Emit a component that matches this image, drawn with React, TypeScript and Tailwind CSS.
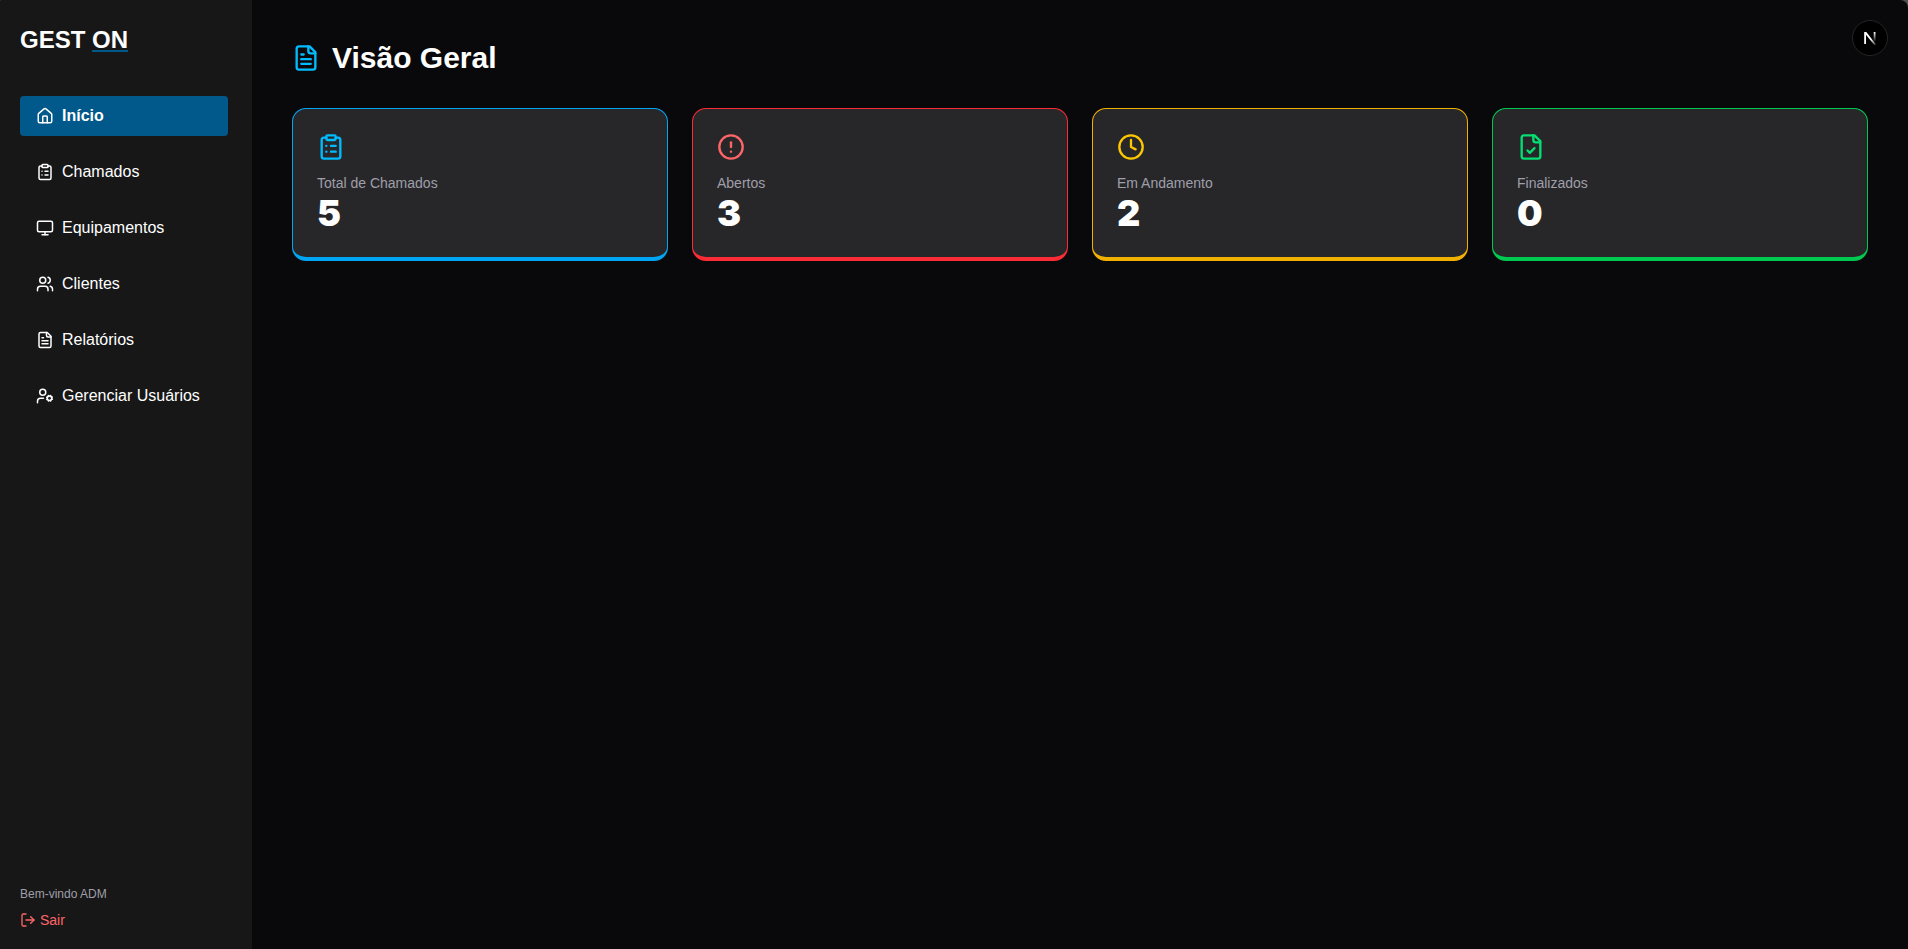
import {
  LuCircleAlert,
  LuClipboardList,
  LuClock,
  LuFileCheck,
  LuFileText,
  LuHouse,
  LuLogOut,
  LuMonitor,
  LuUserCog,
  LuUsers,
} from "react-icons/lu";

const navItems = [
  { label: "Início", icon: LuHouse, active: true },
  { label: "Chamados", icon: LuClipboardList, active: false },
  { label: "Equipamentos", icon: LuMonitor, active: false },
  { label: "Clientes", icon: LuUsers, active: false },
  { label: "Relatórios", icon: LuFileText, active: false },
  { label: "Gerenciar Usuários", icon: LuUserCog, active: false },
];

const stats = [
  { label: "Total de Chamados", value: 5, icon: LuClipboardList, border: "border-sky-500", color: "text-sky-400" },
  { label: "Abertos", value: 3, icon: LuCircleAlert, border: "border-red-500", color: "text-red-400" },
  { label: "Em Andamento", value: 2, icon: LuClock, border: "border-yellow-500", color: "text-yellow-400" },
  { label: "Finalizados", value: 0, icon: LuFileCheck, border: "border-green-500", color: "text-green-400" },
];

function Sidebar() {
  return (
    <aside className="flex w-63 shrink-0 flex-col justify-between bg-neutral-900 pt-5 pr-6 pb-[19px] pl-5">
      <div>
        <div className="mb-10 pt-1 text-2xl font-bold">
          GEST <span className="underline decoration-sky-800 decoration-2 underline-offset-2">ON</span>
        </div>
        <nav className="flex flex-col gap-4">
          {navItems.map(({ label, icon: Icon, active }) => (
            <a
              key={label}
              href="#"
              className={
                active
                  ? "flex items-center gap-2 rounded bg-sky-800 px-4 py-2 font-bold"
                  : "flex items-center gap-2 rounded px-4 py-2"
              }
            >
              <Icon size={18} />
              {label}
            </a>
          ))}
        </nav>
      </div>
      <div>
        <p className="mb-2 text-xs text-zinc-400">Bem-vindo ADM</p>
        <button type="button" className="flex items-center gap-1 text-sm text-red-400">
          <LuLogOut size={16} />
          Sair
        </button>
      </div>
    </aside>
  );
}

function DevBadge() {
  return (
    <button
      type="button"
      aria-label="Next.js"
      className="fixed top-5 right-5 flex size-9 items-center justify-center rounded-full border border-neutral-800 bg-black"
    >
      <svg width="14" height="14" viewBox="0 0 14 14" fill="none">
        <defs>
          <linearGradient id="stem" x1="0" y1="1" x2="0" y2="11" gradientUnits="userSpaceOnUse">
            <stop stopColor="#fff" />
            <stop offset="1" stopColor="#fff" stopOpacity="0" />
          </linearGradient>
          <linearGradient id="diagonal" x1="8" y1="8" x2="13" y2="15" gradientUnits="userSpaceOnUse">
            <stop stopColor="#fff" />
            <stop offset="1" stopColor="#fff" stopOpacity="0.1" />
          </linearGradient>
        </defs>
        <path d="M1.2 1h2.1l9.6 12.3-1.5.9L3 3.8V13H1.2Z" fill="url(#diagonal)" />
        <path d="M11.6 1v10" stroke="url(#stem)" strokeWidth="1.8" />
      </svg>
    </button>
  );
}

export default function App() {
  return (
    <div className="bg-neutral-600 font-['Liberation_Sans',Arial,sans-serif] text-white">
      <div className="flex min-h-screen overflow-hidden rounded-tl-xs rounded-tr-lg bg-zinc-950">
        <Sidebar />
        <main className="min-w-0 flex-1 p-10">
          <h1 className="mb-8 flex items-center gap-3 text-3xl font-bold">
            <LuFileText size={28} className="text-sky-400" />
            Visão Geral
          </h1>
          <div className="grid grid-cols-1 gap-6 sm:grid-cols-2 lg:grid-cols-4">
            {stats.map(({ label, value, icon: Icon, border, color }) => (
              <section key={label} className={`rounded-[14px] border border-b-4 bg-zinc-800 p-6 ${border}`}>
                <Icon size={28} className={`mb-3 ${color}`} />
                <p className="text-sm text-zinc-400">{label}</p>
                <p className="font-[Inter,sans-serif] text-4xl font-black">{value}</p>
              </section>
            ))}
          </div>
        </main>
      </div>
      <DevBadge />
    </div>
  );
}
